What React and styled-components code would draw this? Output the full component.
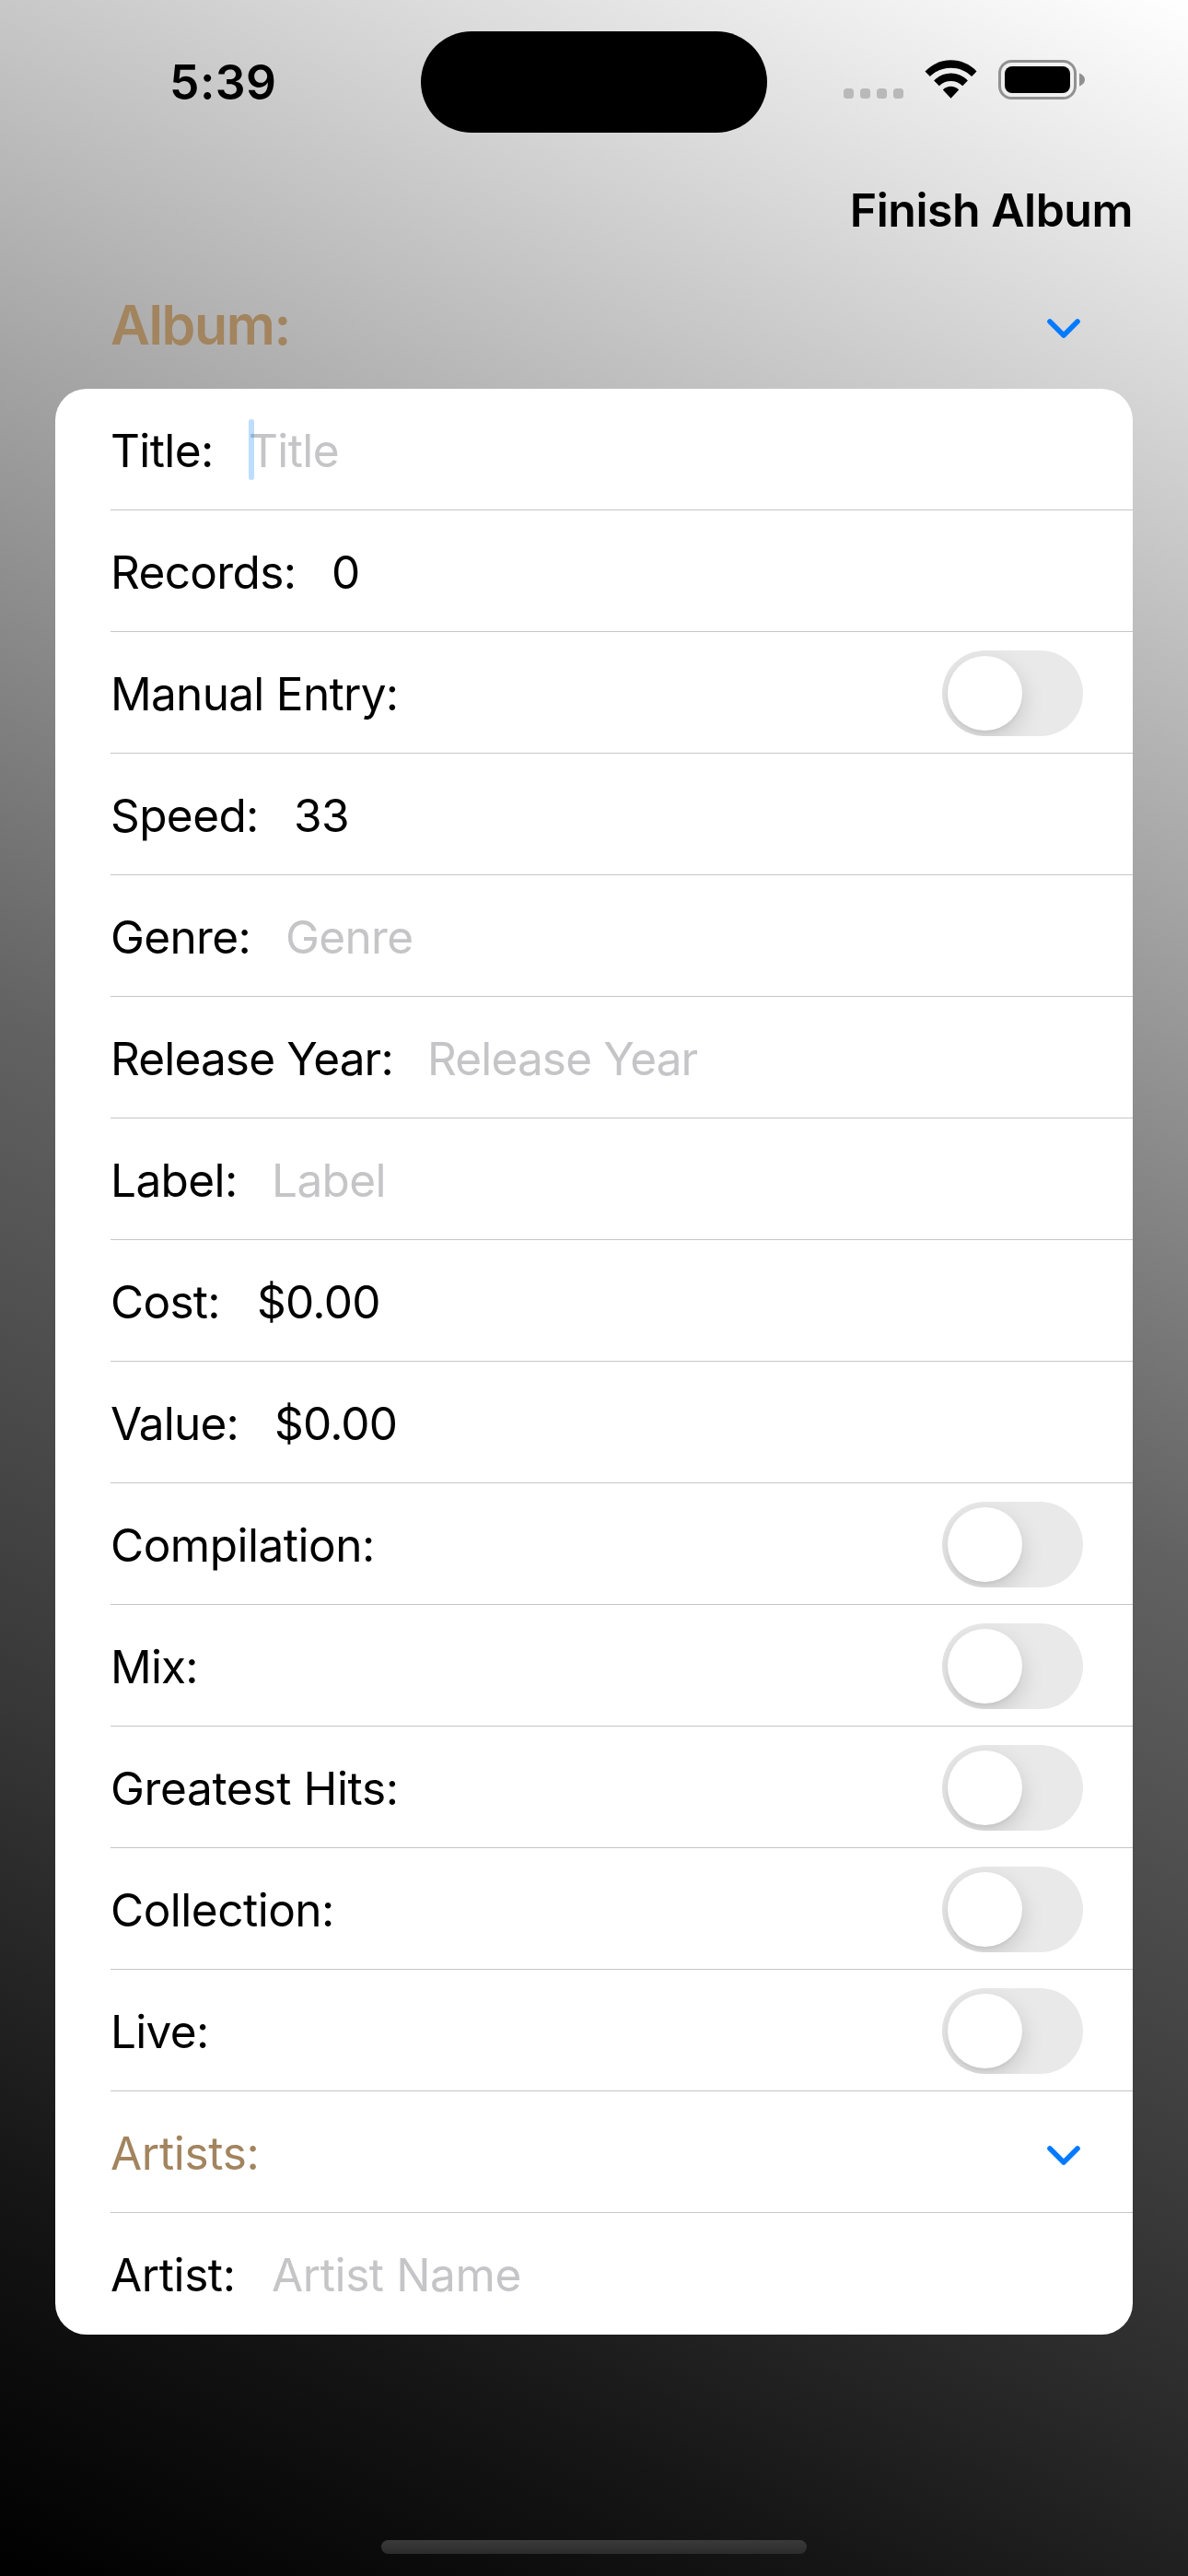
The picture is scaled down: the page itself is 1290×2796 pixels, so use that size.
import React from "react";
import styled, { createGlobalStyle } from "styled-components";

const GlobalStyle = createGlobalStyle`
  html, body { margin: 0; padding: 0; }
  body { font-family: Inter, "Liberation Sans", sans-serif; }
  *, *::before, *::after { box-sizing: border-box; }
`;

const Screen = styled.div`
  width: 1290px;
  height: 2796px;
  display: flex;
  flex-direction: column;
  overflow: hidden;
  color: #000;
  background: linear-gradient(24.77deg, #000 0%, #151515 12.5%, #373737 28%, #626262 50%, #fff 100%);
`;

const StatusBar = styled.header`
  height: 177px;
  flex: none;
  display: grid;
  grid-template-columns: 457px 376px 457px;
  padding-top: 34px;
`;

const Clock = styled.div`
  padding: 24px 0 0 184px;
  font-size: 51.5px;
  line-height: 62px;
  font-weight: 600;
  letter-spacing: 0.5px;
`;

const Island = styled.div`
  height: 110px;
  border-radius: 55px;
  background: #000;
`;

const StatusIcons = styled.div`
  display: flex;
  gap: 23px;
  padding: 31px 0 0 83px;
  height: 76px;
`;

const Dots = styled.div`
  display: flex;
  gap: 7px;
  padding-top: 31px;
`;

const Dot = styled.span`
  width: 11px;
  height: 11px;
  border-radius: 3.5px;
  background: #b9b9b9;
`;

const NavBar = styled.nav`
  height: 105px;
  flex: none;
  display: flex;
  justify-content: flex-end;
  align-items: center;
  padding: 0 60px 3px 0;
`;

const NavButton = styled.button`
  border: 0;
  padding: 0;
  background: none;
  color: #000;
  font-family: inherit;
  font-size: 50px;
  line-height: 60px;
  font-weight: 600;
  letter-spacing: -0.5px;
`;

const SectionHeader = styled.div`
  height: 140px;
  flex: none;
  display: flex;
  justify-content: space-between;
  align-items: center;
  padding: 2px 117px 0 120px;
  svg { margin-top: 7px; }
`;

const SectionTitle = styled.h2`
  margin: 0;
  color: #a2845e;
  font-size: 59px;
  line-height: 72px;
  font-weight: 600;
  letter-spacing: -1.4px;
`;

const Card = styled.main`
  margin: 0 60px;
  flex: none;
  border-radius: 34px;
  background: #fff;
  overflow: hidden;
  padding-left: 60px;
`;

const Row = styled.div`
  height: 132px;
  display: flex;
  align-items: center;
  padding: 2px ${(p) => (p.$chevron ? 57 : 54)}px 0 0;
  border-bottom: 1px solid #c6c6c8;
  &:last-child { border-bottom-color: transparent; }
  svg { margin-top: 6px; }
`;

const Text = styled.span`
  font-size: 49.5px;
  line-height: 60px;
  white-space: pre;
  letter-spacing: ${(p) => p.$track ?? -0.9}px;
  color: ${(p) => p.$color || "#000"};
`;

const Label = styled(Text)`
  width: ${(p) => (p.$w ? `${p.$w}px` : "auto")};
`;

const Field = styled.span`
  position: relative;
  display: flex;
`;

const Caret = styled.i`
  position: absolute;
  left: 0;
  top: -4px;
  width: 6px;
  height: 66px;
  border-radius: 3px;
  background: rgba(0, 122, 255, 0.26);
`;

const Spacer = styled.span`
  flex: 1;
`;

const Toggle = styled.span`
  width: 153px;
  height: 93px;
  border-radius: 47px;
  background: #e9e9e9;
  padding: 6px;
  overflow: hidden;
`;

const Knob = styled.span`
  display: block;
  width: 81px;
  height: 81px;
  border-radius: 50%;
  background: #fff;
  box-shadow: 0 9px 24px rgba(0, 0, 0, 0.15), 0 3px 3px rgba(0, 0, 0, 0.04);
`;

const HomeArea = styled.footer`
  flex: 1;
  display: flex;
  justify-content: center;
  align-items: flex-end;
  padding-bottom: 24px;
`;

const HomeBar = styled.div`
  width: 462px;
  height: 15px;
  border-radius: 8px;
  background: linear-gradient(#3a3a3a, #2c2c2c);
`;

const Chevron = () => (
  <svg width="36" height="21" viewBox="0 0 36 21" fill="none">
    <path d="M3 3 18 18 33 3" stroke="#007aff" strokeWidth="5.6" strokeLinecap="round" strokeLinejoin="round" />
  </svg>
);

const Wifi = () => (
  <svg width="57" height="43" viewBox="0 0 58 43">
    <path d="M29 0C40 0 50 4.400 57.500 12.300L52 18C46 11.800 38 8.500 29 8.500S12 11.800 6 18L.5 12.300C8 4.400 18 0 29 0Z" />
    <path d="M29 14.500C36 14.500 42.700 17.400 47.700 22.400L41.900 28.300C38.400 24.900 33.800 23 29 23S19.600 24.900 16.100 28.300L10.300 22.400C15.300 17.400 22 14.500 29 14.500Z" />
    <path d="M29 29C32.300 29 35.400 30.200 37.800 32.700L29 42L20.200 32.700C22.600 30.200 25.700 29 29 29Z" />
  </svg>
);

const Battery = () => (
  <svg width="95" height="43" viewBox="0 0 95 43">
    <rect x="1.500" y="1.500" width="82" height="40" rx="13" fill="none" stroke="#919191" strokeWidth="3" />
    <rect x="7" y="7" width="71" height="29" rx="8" />
    <path d="M88 14.500C91.500 15.800 94 18.500 94 21.500S91.500 27.200 88 28.500Z" fill="#8f8f8f" />
  </svg>
);

const rows = [
  { label: "Title:", w: 150, track: -0.6, placeholder: "Title", caret: true },
  { label: "Records:", w: 240, track: -0.65, value: "0" },
  { label: "Manual Entry:", track: -0.7, toggle: true },
  { label: "Speed:", w: 199, track: -0.6, value: "33" },
  { label: "Genre:", w: 190, track: -0.65, placeholder: "Genre" },
  { label: "Release Year:", w: 344, track: -0.85, placeholder: "Release Year" },
  { label: "Label:", w: 175, track: -0.6, placeholder: "Label" },
  { label: "Cost:", w: 159, track: -0.7, value: "$0.00" },
  { label: "Value:", w: 178, track: -0.8, value: "$0.00" },
  { label: "Compilation:", track: -0.5, toggle: true },
  { label: "Mix:", track: -0.8, toggle: true },
  { label: "Greatest Hits:", track: -0.35, toggle: true },
  { label: "Collection:", track: -0.5, toggle: true },
  { label: "Live:", track: -0.7, toggle: true },
  { label: "Artists:", track: -0.3, chevron: true },
  { label: "Artist:", w: 175, track: -0.4, placeholder: "Artist Name" },
];

export default function App() {
  return (
    <Screen>
      <GlobalStyle />
      <StatusBar>
        <Clock>5:39</Clock>
        <Island />
        <StatusIcons>
          <Dots>
            <Dot /><Dot /><Dot /><Dot />
          </Dots>
          <Wifi />
          <Battery />
        </StatusIcons>
      </StatusBar>
      <NavBar>
        <NavButton>Finish Album</NavButton>
      </NavBar>
      <SectionHeader>
        <SectionTitle>Album:</SectionTitle>
        <Chevron />
      </SectionHeader>
      <Card>
        {rows.map((r) => (
          <Row key={r.label} $chevron={r.chevron}>
            <Label $w={r.w} $track={r.track} $color={r.chevron && "#a2845e"}>{r.label}</Label>
            <Field>
              <Text $track={r.track} $color={r.placeholder && "#c5c5c7"}>{r.placeholder || r.value}</Text>
              {r.caret && <Caret />}
            </Field>
            <Spacer />
            {r.toggle && <Toggle><Knob /></Toggle>}
            {r.chevron && <Chevron />}
          </Row>
        ))}
      </Card>
      <HomeArea>
        <HomeBar />
      </HomeArea>
    </Screen>
  );
}
